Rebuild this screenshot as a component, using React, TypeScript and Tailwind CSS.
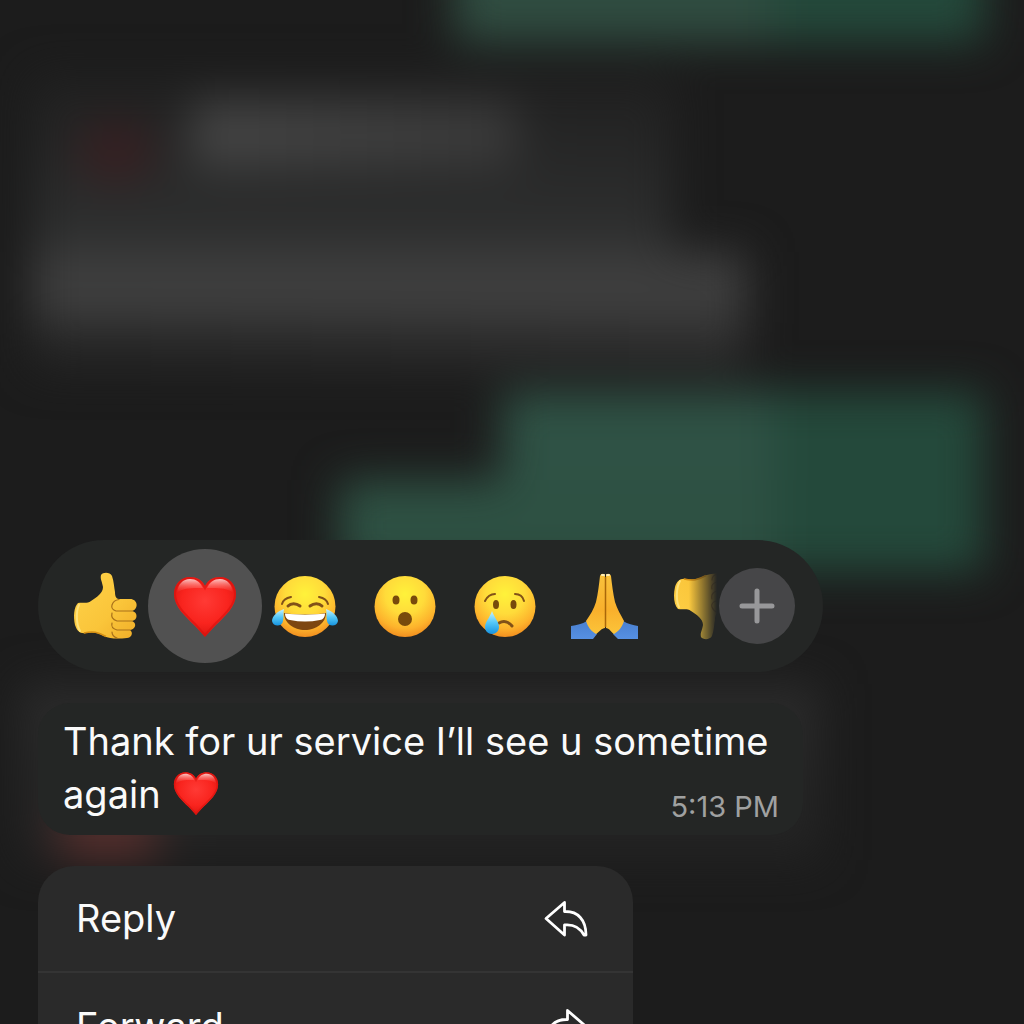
import React, { useState } from "react";

function ThumbShape() {
  return (
    <>
      <path
        d="M8 32C13 31 17 33 21 30C27 26 33 22 33 16C32 10 30 8 31 4C33 1 40 1 42 5C44 11 44 16 45 21C45 25 46 28 49 28H60C68 28 69 38 62 40C68 41 68 49 62 50C67 52 66 58 60 59C64 62 61 67 57 67C48 68 40 68 34 65C27 61 22 61 16 62C10 63 7 60 5 54C3 45 4 36 8 32Z"
        fill="url(#hand)"
      />
      <path
        d="M42 34C43 31 45 29 49 28.500M42 34C41 37 43 39 46 40H62M42 42C41 46 43 49 47 50H62M42 52C41 56 43 58 47 59H60M42 61C42 65 44 66 47 67"
        fill="none"
        stroke="#a8701a"
        strokeWidth="1.200"
        strokeLinecap="round"
      />
      <path d="M9 34C6 40 6 53 10 60" fill="none" stroke="#ffe27a" strokeWidth="2" strokeLinecap="round" />
      <path d="M14 62C23 60 28 61 36 65.500" fill="none" stroke="#d58f14" strokeWidth="1.500" />
    </>
  );
}

function ThumbsUp() {
  return (
    <svg viewBox="0 0 70 70" className="size-[70px]" aria-hidden="true">
      <ThumbShape />
    </svg>
  );
}

function ThumbsDown() {
  return (
    <svg viewBox="0 0 70 70" className="size-[70px]" aria-hidden="true">
      <g transform="matrix(1 0 0 -1 0 70)">
        <ThumbShape />
      </g>
    </svg>
  );
}

function Heart({ className }: { className: string }) {
  return (
    <svg viewBox="0 0 70 70" className={className} aria-hidden="true">
      <path
        d="M35 15C38 9 43 6 50 6C59 6 66 13 66 23C66 36 54 46 46 54C41 59 38 63 35 66C32 63 29 59 24 54C16 46 4 36 4 23C4 13 11 6 20 6C27 6 32 9 35 15Z"
        fill="url(#heart)"
      />
      <path
        d="M35 17C38 10 43 7 50 7C58 7 65 14 65 23C65 35 53 45 45 53L35 64L25 53C17 45 5 35 5 23C5 14 12 7 20 7C27 7 32 10 35 17Z"
        fill="none"
        stroke="#d9100c"
        strokeWidth="2"
        opacity="0.6"
      />
      <path d="M7 22C8 13 13 8 20 8C26 8 30 11 33 17C27 17 13 16 7 22Z" fill="url(#gloss)" />
      <path d="M37 17C40 11 44 8 50 8C57 8 62 13 63 22C57 16 43 17 37 17Z" fill="url(#gloss)" />
    </svg>
  );
}

function Joy() {
  return (
    <svg viewBox="0 0 70 70" className="size-[70px]" aria-hidden="true">
      <circle cx="35" cy="35.500" r="30.500" fill="url(#face)" />
      <g fill="none" stroke="#815118" strokeLinecap="round">
        <path d="M12 33C13 29 16 27 21 26" strokeWidth="2" />
        <path d="M49 26C54 27 57 29 58 33" strokeWidth="2" />
        <path d="M18 35C21 32 26 32 30 35" strokeWidth="3" />
        <path d="M40 35C44 32 49 32 52 35" strokeWidth="3" />
      </g>
      <path d="M14 42C26 44 44 44 56 42C56 52 46 59 35 59C24 59 14 52 14 42Z" fill="#7d4611" />
      <path d="M15 42.500C27 44 43 44 55 42.500C55 46 53 49 50 49C40 51 30 51 20 49C17 49 15 46 15 42.500Z" fill="#fff" />
      <path d="M14 38C8 40 2 45 2 50C3 56 12 56 13 50C14 46 13 42 14 38Z" fill="url(#tear)" />
      <path d="M56 38C62 40 68 45 68 50C67 56 58 56 57 50C56 46 57 42 56 38Z" fill="url(#tear)" />
    </svg>
  );
}

function Wow() {
  return (
    <svg viewBox="0 0 70 70" className="size-[70px]" aria-hidden="true">
      <circle cx="35" cy="35.500" r="30.500" fill="url(#face)" />
      <g fill="#784a0c">
        <ellipse cx="26" cy="29" rx="3.500" ry="4.500" />
        <ellipse cx="44" cy="29" rx="3.500" ry="4.500" />
        <ellipse cx="35" cy="48" rx="7" ry="7" />
      </g>
    </svg>
  );
}

function Cry() {
  return (
    <svg viewBox="0 0 70 70" className="size-[70px]" aria-hidden="true">
      <circle cx="35" cy="35.500" r="30.500" fill="url(#face)" />
      <g fill="none" stroke="#815118" strokeWidth="2" strokeLinecap="round">
        <path d="M15 30C17 26 20 23 25 23" />
        <path d="M45 23C50 23 53 26 54 30" />
        <path d="M29 52C34 49 39 51 42 55" strokeWidth="3" />
      </g>
      <ellipse cx="26" cy="33.500" rx="3" ry="4.500" fill="#784a0c" />
      <ellipse cx="43.500" cy="33.500" rx="3" ry="4.500" fill="#784a0c" />
      <path d="M22 40C24 46 29 51 29 56C29 60 26 63 22 63C18 63 15 60 15 56C15 51 20 46 22 40Z" fill="url(#tear)" />
    </svg>
  );
}

function Pray() {
  return (
    <svg viewBox="0 0 70 70" className="size-[70px]" aria-hidden="true">
      <path d="M1 55C7 54 12 53 17 50L27 63L23 68H1Z" fill="url(#sleeve)" />
      <path d="M68 55C63 54 58 53 53 50L43 63L48 68H68Z" fill="url(#sleeve)" />
      <path d="M35 5C35 2 31 2 30 5C29 14 28 22 26 31C24 38 20 44 16 50C18 56 21 60 26 63C29 61 32 57 35 57Z" fill="url(#palm)" />
      <path d="M36 5C36 2 40 2 41 5C42 14 43 22 45 31C47 38 51 44 54 50C52 56 49 60 44 63C41 61 39 57 36 57Z" fill="url(#palm)" />
      <path d="M35.500 6V56" stroke="#a9670a" strokeWidth="1.500" />
      <path d="M32 4H34M37 4H39" stroke="#ffeeb8" strokeWidth="2" strokeLinecap="round" />
    </svg>
  );
}

// Shared gradients for the emoji drawings
function EmojiPaints() {
  return (
    <svg className="absolute size-0" aria-hidden="true">
      <defs>
        <radialGradient id="face" cx="0.5" cy="0.3" r="0.72">
          <stop offset="0" stopColor="#fff23a" />
          <stop offset="0.45" stopColor="#ffdb3a" />
          <stop offset="0.78" stopColor="#fdb32c" />
          <stop offset="1" stopColor="#f08a1e" />
        </radialGradient>
        <linearGradient id="hand" x1="0" y1="0" x2="1" y2="1">
          <stop offset="0" stopColor="#ffd34a" />
          <stop offset="0.6" stopColor="#fac53a" />
          <stop offset="1" stopColor="#f0ad28" />
        </linearGradient>
        <linearGradient id="palm" x1="0" y1="0" x2="0" y2="1">
          <stop offset="0" stopColor="#f9c23c" />
          <stop offset="0.6" stopColor="#f9b02c" />
          <stop offset="1" stopColor="#fbc43a" />
        </linearGradient>
        <radialGradient id="heart" cx="0.5" cy="0.4" r="0.62">
          <stop offset="0" stopColor="#ff3a35" />
          <stop offset="0.6" stopColor="#f9241e" />
          <stop offset="1" stopColor="#d9140f" />
        </radialGradient>
        <linearGradient id="gloss" x1="0" y1="0" x2="0" y2="1">
          <stop offset="0" stopColor="#fff" stopOpacity="0.75" />
          <stop offset="1" stopColor="#ff6a60" stopOpacity="0" />
        </linearGradient>
        <linearGradient id="tear" x1="0" y1="0" x2="0" y2="1">
          <stop offset="0" stopColor="#c9f3ff" />
          <stop offset="0.5" stopColor="#55c8f7" />
          <stop offset="1" stopColor="#1793e0" />
        </linearGradient>
        <linearGradient id="sleeve" x1="0" y1="0" x2="0" y2="1">
          <stop offset="0" stopColor="#4a80d0" />
          <stop offset="1" stopColor="#5690e2" />
        </linearGradient>
      </defs>
    </svg>
  );
}

function ReplyArrow({ className }: { className?: string }) {
  return (
    <svg viewBox="0 0 44 37" className={`h-[37px] w-11 ${className ?? ""}`} fill="none" aria-hidden="true">
      <path
        d="M20.500 2.500L2 18.500L20.500 35V25C30 24 36 28 40 35H42C42 20 34 11 20.500 11.500Z"
        stroke="#fff"
        strokeWidth="2.800"
        strokeLinejoin="round"
      />
    </svg>
  );
}

const REACTIONS = [
  { label: "Thumbs up", icon: <ThumbsUp /> },
  { label: "Heart", icon: <Heart className="size-[70px]" /> },
  { label: "Laugh", icon: <Joy /> },
  { label: "Surprised", icon: <Wow /> },
  { label: "Sad", icon: <Cry /> },
  { label: "Thanks", icon: <Pray /> },
  { label: "Thumbs down", icon: <ThumbsDown /> },
];

// The conversation behind the overlay, out of focus
function ChatBackdrop() {
  return (
    <div className="absolute inset-0 overflow-hidden" aria-hidden="true">
      <div className="-mt-20 flex flex-col blur-[22px]">
        <div className="mr-10 flex h-[122px] w-[530px] self-end">
          <div className="flex-[3] bg-[#304d41]" />
          <div className="flex-[2] bg-[#24493b]" />
        </div>
        <div className="mt-[34px] ml-8 flex h-[176px] w-[640px] items-start bg-linear-to-b from-[#202020] to-[#303131] pt-6 pl-12">
          <div className="mt-6 h-14 w-[72px] rounded-full bg-[#371f21]" />
          <div className="ml-10 h-[68px] w-[325px] bg-linear-to-r from-[#444444] to-[#383838]" />
        </div>
        <div className="ml-8 h-[72px] w-[715px] bg-[#3e3e3e]" />
        <div className="ml-8 h-11 w-[715px] bg-linear-to-r from-[#252525] to-[#2e2e2e]" />
        <div className="mt-6 mr-10 flex h-[88px] w-[482px] self-end">
          <div className="flex-1 bg-[#2f5245]" />
          <div className="w-[210px] bg-[#24493b]" />
        </div>
        <div className="mr-10 flex h-[92px] w-[645px] self-end">
          <div className="flex-1 bg-[#2e5143]" />
          <div className="w-[210px] bg-[#24493b]" />
        </div>
        <div className="mt-[112px] ml-5 h-[176px] w-[800px] bg-linear-to-b from-[#2c2c2c] to-[#222222] pt-[126px] pl-10">
          <div className="h-12 w-24 bg-[#5a302e]" />
        </div>
      </div>
    </div>
  );
}

export default function App() {
  const [selected, setSelected] = useState("Heart");

  return (
    <main className="relative h-screen overflow-hidden bg-[#1c1c1c] font-['Inter','Liberation_Sans',sans-serif] text-[#fafafa]">
      <EmojiPaints />
      <ChatBackdrop />

      <div className="relative flex flex-col items-start px-[38px] pt-[540px]">
        {/* Reactions */}
        <div className="flex h-[132px] w-full max-w-[785px] items-center rounded-full bg-[#242625] pr-7 pl-[17px]">
          <div className="flex h-full min-w-0 flex-1 items-center overflow-hidden [mask-image:linear-gradient(to_right,#000_calc(100%-28px),transparent_100%)]">
            {REACTIONS.map((reaction) => (
              <button
                key={reaction.label}
                type="button"
                aria-label={reaction.label}
                aria-pressed={selected === reaction.label}
                onClick={() => setSelected(reaction.label)}
                className="flex w-[100px] shrink-0 justify-center"
              >
                <span
                  className={`flex size-[114px] shrink-0 items-center justify-center rounded-full ${
                    selected === reaction.label ? "bg-[#515151]" : ""
                  }`}
                >
                  {reaction.icon}
                </span>
              </button>
            ))}
          </div>
          <button
            type="button"
            aria-label="More reactions"
            className="ml-0.5 flex size-[76px] shrink-0 items-center justify-center rounded-full bg-[#464648]"
          >
            <svg viewBox="0 0 36 36" className="size-9" aria-hidden="true">
              <path d="M18 3V33M3 18H33" stroke="#98989a" strokeWidth="5" strokeLinecap="round" />
            </svg>
          </button>
        </div>

        {/* Message */}
        <div className="mt-[31px] flex w-full max-w-[765px] flex-col rounded-[32px] bg-[#242625] pt-3 pr-6 pb-3 pl-[25px]">
          <p className="text-[38px] leading-[53px]">
            Thank for ur service I’ll see u sometime again{" "}
            <Heart className="inline-block size-[50px] align-[-10px]" />
          </p>
          <time className="-mt-[30px] self-end text-[29px] leading-8 text-[#a0a1a1]">5:13 PM</time>
        </div>

        {/* Actions */}
        <div className="mt-[31px] w-full max-w-[595px] divide-y-2 divide-[#343434] overflow-hidden rounded-[36px] bg-[#2a2a2a]">
          <button type="button" className="flex h-[107px] w-full items-center justify-between pr-[45px] pl-[38px] text-[38px]">
            Reply
            <ReplyArrow />
          </button>
          <button type="button" className="flex h-[107px] w-full items-center justify-between pr-[45px] pl-[38px] text-[38px]">
            Forward
            <ReplyArrow className="-scale-x-100" />
          </button>
        </div>
      </div>
    </main>
  );
}
